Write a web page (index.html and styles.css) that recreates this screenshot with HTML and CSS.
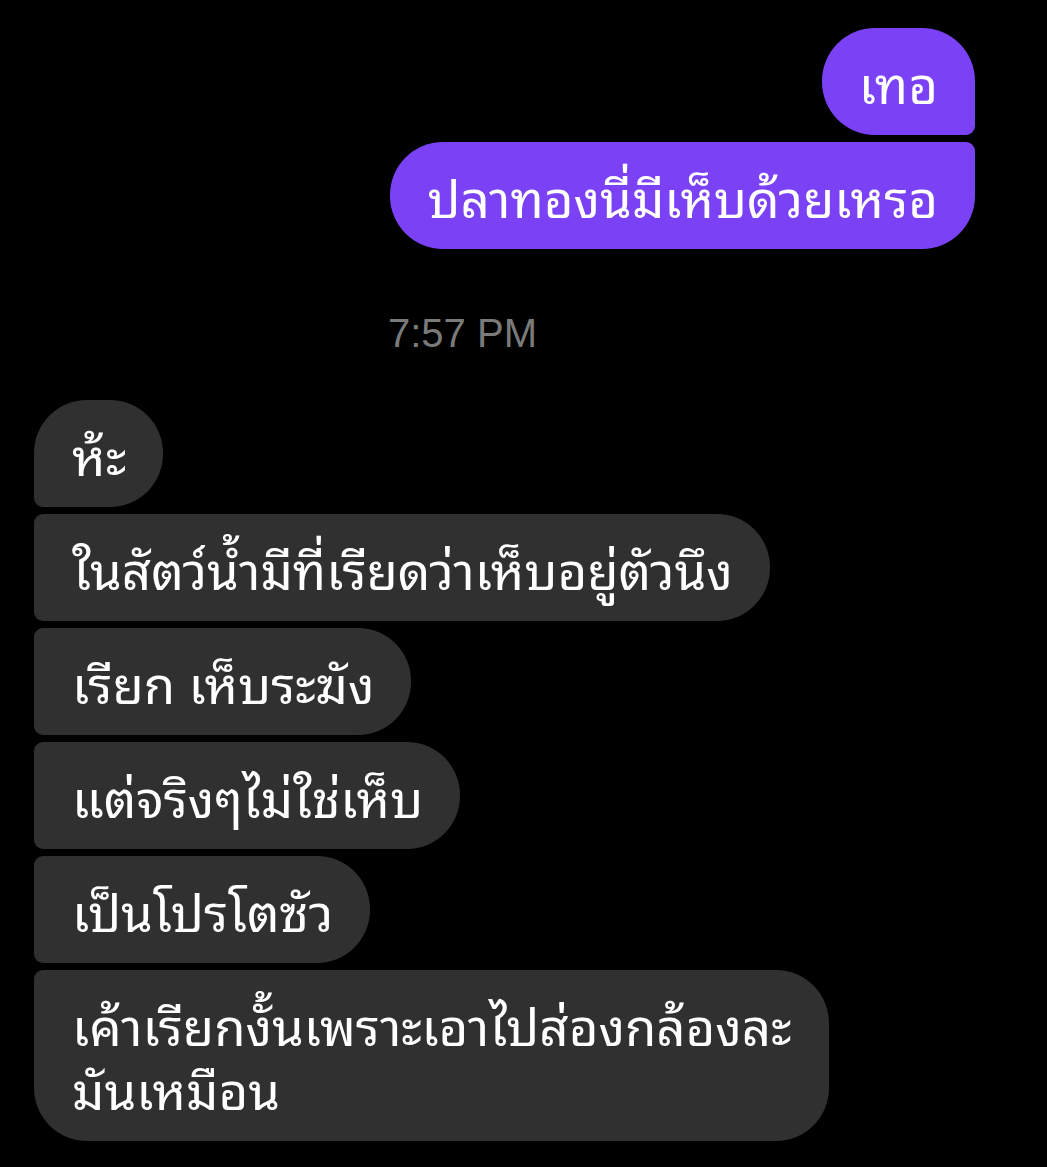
FILE: index.html
```html
<!DOCTYPE html>
<html lang="th">
<head>
<meta charset="utf-8">
<link rel="stylesheet" href="styles.css">
</head>
<body>
<div class="chat">
  <div class="group sent">
    <div class="bubble out first">เทอ</div>
    <div class="bubble out last">ปลาทองนี่มีเห็บด้วยเหรอ</div>
  </div>
  <div class="time">7:57 PM</div>
  <div class="group recv">
    <div class="bubble in first">ห้ะ</div>
    <div class="bubble in mid">ในสัตว์น้ำมีที่เรียดว่าเห็บอยู่ตัวนึง</div>
    <div class="bubble in mid">เรียก เห็บระฆัง</div>
    <div class="bubble in mid">แต่จริงๆไม่ใช่เห็บ</div>
    <div class="bubble in mid">เป็นโปรโตซัว</div>
    <div class="bubble in last">เค้าเรียกงั้นเพราะเอาไปส่องกล้องละ<br>มันเหมือน</div>
  </div>
</div>
</body>
</html>
```

FILE: styles.css
```css
html, body {
  margin: 0;
  padding: 0;
  background: #000;
}
.chat {
  padding: 28px 72px 0 34px;
  font-family: "Noto Sans Thai Looped", "Noto Sans Thai", "Noto Sans", "DejaVu Sans", sans-serif;
}
.group {
  display: flex;
  flex-direction: column;
  gap: 7px;
}
.sent { align-items: flex-end; }
.recv { align-items: flex-start; }
.bubble {
  color: #fff;
  font-size: 51px;
  line-height: 64px;
  padding: 21px 37px 22px 37px;
  border-radius: 53px;
  box-sizing: border-box;
}
.out { background: #7b42f5; }
.in { background: #303030; padding-left: 38px; }
.out.first { border-bottom-right-radius: 9px; }
.out.last { border-top-right-radius: 9px; }
.in.first { border-bottom-left-radius: 9px; }
.in.mid { border-top-left-radius: 9px; border-bottom-left-radius: 9px; }
.in.last { border-top-left-radius: 9px; }
.time {
  font-family: "Liberation Sans", Arial, sans-serif;
  font-size: 40px;
  line-height: 46px;
  color: #7a7a7a;
  padding-left: 354px;
  margin: 61px 0 44px;
}
```
